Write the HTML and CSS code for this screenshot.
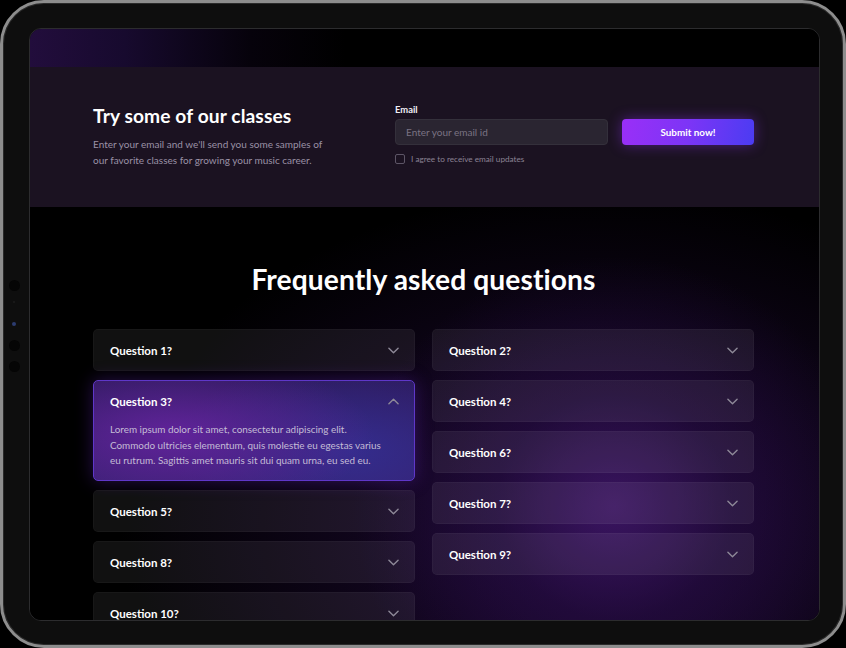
FILE: index.html
```html
<!DOCTYPE html>
<html lang="en">
<head>
<meta charset="utf-8">
<title>Try some of our classes</title>
<link rel="stylesheet" href="styles.css">
</head>
<body>
<div class="device">
  <div class="sensors">
    <span class="dot big"></span>
    <span class="dot tiny"></span>
    <span class="dot cam"></span>
    <span class="dot big b2"></span>
    <span class="dot big b3"></span>
  </div>
  <div class="screen">
    <div class="topbar"></div>
    <section class="newsletter">
      <div class="intro">
        <h2 class="intro-title">Try some of our classes</h2>
        <p class="intro-text">Enter your email and we'll send you some samples of<br>our favorite classes for growing your music career.</p>
      </div>
      <form class="signup">
        <label class="field-label" for="email">Email</label>
        <div class="signup-row">
          <input class="email-input" id="email" type="text" placeholder="Enter your email id">
          <button class="submit-btn" type="button">Submit now!</button>
        </div>
        <label class="agree"><span class="checkbox"></span>I agree to receive email updates</label>
      </form>
    </section>
    <section class="faq">
      <h1 class="faq-title">Frequently asked questions</h1>
      <div class="faq-grid">
        <div class="faq-col">
          <div class="faq-item"><span>Question 1?</span><svg class="chev" viewBox="0 0 12 7"><polyline points="1,1 6,6 11,1"/></svg></div>
          <div class="faq-item open">
            <div class="faq-head"><span>Question 3?</span><svg class="chev" viewBox="0 0 12 7"><polyline points="1,6 6,1 11,6"/></svg></div>
            <p class="faq-answer">Lorem ipsum dolor sit amet, consectetur adipiscing elit. Commodo ultricies elementum, quis molestie eu egestas varius eu rutrum. Sagittis amet mauris sit dui quam urna, eu sed eu.</p>
          </div>
          <div class="faq-item"><span>Question 5?</span><svg class="chev" viewBox="0 0 12 7"><polyline points="1,1 6,6 11,1"/></svg></div>
          <div class="faq-item"><span>Question 8?</span><svg class="chev" viewBox="0 0 12 7"><polyline points="1,1 6,6 11,1"/></svg></div>
          <div class="faq-item"><span>Question 10?</span><svg class="chev" viewBox="0 0 12 7"><polyline points="1,1 6,6 11,1"/></svg></div>
        </div>
        <div class="faq-col">
          <div class="faq-item"><span>Question 2?</span><svg class="chev" viewBox="0 0 12 7"><polyline points="1,1 6,6 11,1"/></svg></div>
          <div class="faq-item"><span>Question 4?</span><svg class="chev" viewBox="0 0 12 7"><polyline points="1,1 6,6 11,1"/></svg></div>
          <div class="faq-item"><span>Question 6?</span><svg class="chev" viewBox="0 0 12 7"><polyline points="1,1 6,6 11,1"/></svg></div>
          <div class="faq-item"><span>Question 7?</span><svg class="chev" viewBox="0 0 12 7"><polyline points="1,1 6,6 11,1"/></svg></div>
          <div class="faq-item"><span>Question 9?</span><svg class="chev" viewBox="0 0 12 7"><polyline points="1,1 6,6 11,1"/></svg></div>
        </div>
      </div>
    </section>
  </div>
</div>
</body>
</html>
```

FILE: styles.css
```css
* { box-sizing: border-box; }
html, body { margin: 0; padding: 0; }
body {
  background: #000;
  width: 846px;
  height: 648px;
  overflow: hidden;
  font-family: "Lato", "Noto Sans", sans-serif;
  color: #fff;
}
.device {
  position: relative;
  width: 846px;
  height: 648px;
  border-radius: 44px;
  background: #0e0e0e;
  border: 3px solid #8d8d8d;
  padding: 25px 24px 25px 26px;
  box-shadow: inset 0 0 0 1px #2a2a2a;
}
.sensors {
  position: absolute;
  left: 5px;
  top: 277px;
  width: 12px;
  display: flex;
  flex-direction: column;
  align-items: center;
}
.dot { display: block; border-radius: 50%; background: #050505; }
.dot.big { width: 11px; height: 11px; }
.dot.tiny { width: 2px; height: 2px; background: #1d1d1d; margin-top: 10px; }
.dot.cam { width: 4px; height: 4px; background: #2c3c70; margin-top: 19px; }
.dot.b2 { margin-top: 14px; }
.dot.b3 { margin-top: 10px; }
.screen {
  width: 791px;
  height: 593px;
  border-radius: 12px;
  border: 1px solid #2c2c2e;
  overflow: hidden;
  background: #000;
  display: flex;
  flex-direction: column;
}
.topbar {
  height: 38px;
  flex: none;
  background: linear-gradient(90deg, #220d3c 0%, #170a2e 12%, #06020b 28%, #000 40%);
}
.newsletter {
  flex: none;
  height: 140px;
  background: #1b1221;
  display: flex;
  justify-content: space-between;
  padding: 37px 65px 0 63px;
}
.intro-title {
  margin: 0;
  font-size: 19.2px;
  font-weight: 700;
  line-height: 24px;
  letter-spacing: 0.1px;
}
.intro-text {
  margin: 8px 0 0;
  font-size: 10px;
  line-height: 16px;
  color: #9a91a6;
}
.signup {
  width: 359px;
  margin-top: 0;
  display: flex;
  flex-direction: column;
}
.field-label {
  font-size: 9.4px;
  font-weight: 700;
  line-height: 12px;
  color: #f1eef5;
}
.signup-row {
  display: flex;
  justify-content: space-between;
  margin-top: 3px;
}
.email-input {
  width: 213px;
  height: 26px;
  border-radius: 4px;
  border: 1px solid #34303b;
  background: #2a2531;
  padding: 0 10px;
  font-family: inherit;
  font-size: 10px;
  color: #fff;
  outline: none;
}
.email-input::placeholder { color: #7a7383; }
.submit-btn {
  width: 132px;
  height: 26px;
  border: none;
  border-radius: 4px;
  background: linear-gradient(100deg, #9a2ff7 0%, #7c35f6 50%, #4b3cf2 100%);
  box-shadow: 0 0 14px rgba(140, 50, 240, 0.45);
  font-family: inherit;
  font-size: 9.9px;
  font-weight: 700;
  color: #fff;
}
.agree {
  display: flex;
  align-items: center;
  margin-top: 9px;
  font-size: 8.2px;
  color: #8b8294;
}
.checkbox {
  width: 10px;
  height: 10px;
  border: 1px solid #5d5566;
  border-radius: 2px;
  margin-right: 6px;
}
.faq {
  flex: 1;
  padding: 54px 65px 0 63px;
  background:
    radial-gradient(ellipse 260px 250px at 74% 70%, rgba(70, 25, 115, 0.7) 0%, rgba(45, 14, 80, 0.45) 45%, rgba(15, 5, 30, 0) 100%),
    radial-gradient(ellipse 480px 340px at 72% 75%, rgba(50, 16, 88, 0.6) 0%, rgba(0, 0, 0, 0) 100%),
    #000;
}
.faq-title {
  margin: 0;
  text-align: center;
  font-size: 28.2px;
  font-weight: 700;
  line-height: 36px;
  letter-spacing: 0.1px;
}
.faq-grid {
  margin-top: 32px;
  display: grid;
  grid-template-columns: 322px 322px;
  column-gap: 17px;
  align-items: start;
}
.faq-col {
  display: flex;
  flex-direction: column;
  gap: 9px;
}
.faq-item {
  min-height: 42px;
  border-radius: 5px;
  background: rgba(255, 255, 255, 0.065);
  border: 1px solid rgba(255, 255, 255, 0.03);
  display: flex;
  align-items: center;
  justify-content: space-between;
  padding: 0 15px 0 16px;
  font-size: 11.5px;
  font-weight: 700;
}
.chev {
  width: 11px;
  height: 7px;
  fill: none;
  stroke: #8e8998;
  stroke-width: 1.5;
  stroke-linecap: round;
  stroke-linejoin: round;
}
.faq-item.open {
  display: block;
  padding: 13px 15px 0 16px;
  height: 101px;
  border: 1px solid #5f37c9;
  background:
    radial-gradient(ellipse 200px 80px at 25% 55%, rgba(100, 36, 158, 0.95) 0%, rgba(95, 35, 150, 0) 100%),
    radial-gradient(ellipse 180px 90px at 80% 70%, rgba(52, 46, 145, 0.9) 0%, rgba(50, 45, 140, 0) 100%),
    linear-gradient(180deg, #2d1a5c 0%, #35206e 100%);
  box-shadow: 0 0 18px rgba(110, 40, 210, 0.35);
}
.faq-head {
  display: flex;
  align-items: center;
  justify-content: space-between;
  height: 14px;
}
.faq-answer {
  margin: 14px 0 0;
  max-width: 280px;
  font-size: 9.9px;
  font-weight: 400;
  line-height: 15.5px;
  color: #c4bcd6;
}
```
